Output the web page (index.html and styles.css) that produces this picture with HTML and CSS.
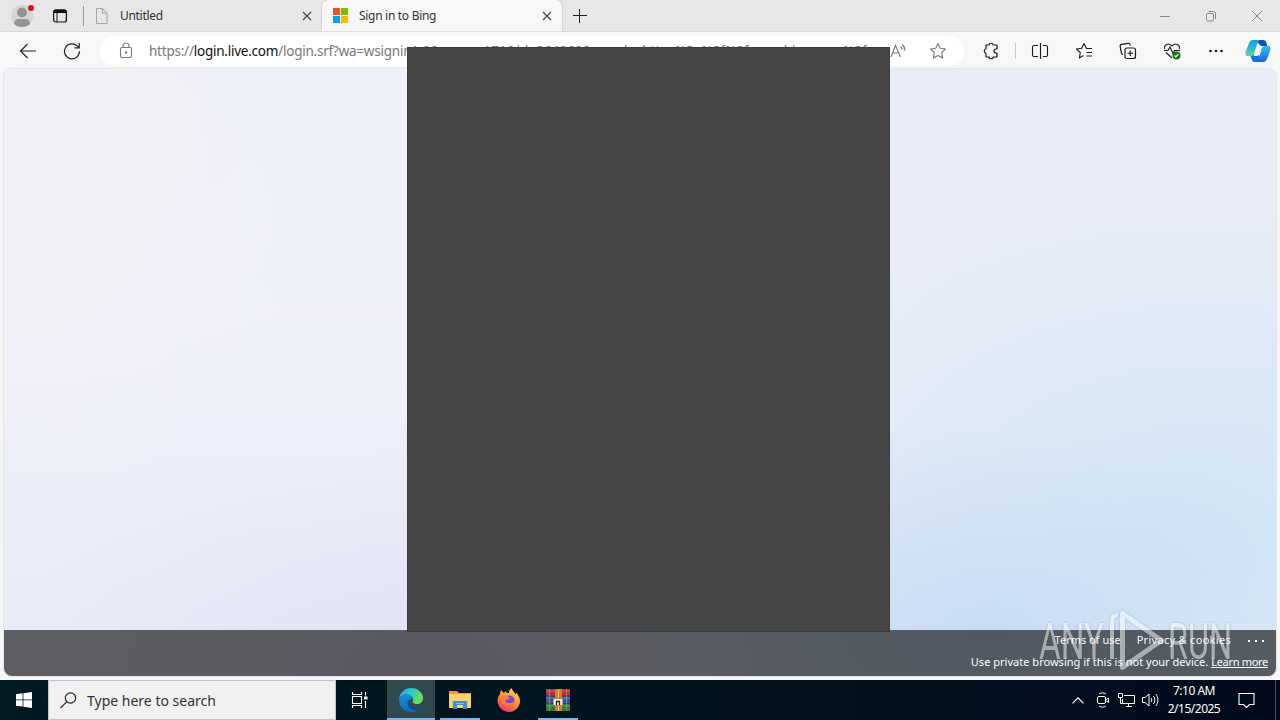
FILE: index.html
```html
<!DOCTYPE html>
<html lang="en">
<head>
    <meta charset="UTF-8">
    <title>Sign in to Bing</title>
    <link rel="stylesheet" href="styles.css">
</head>
<body>
    <div class="tabstrip">
        <div class="profile">
            <svg width="24" height="24" viewBox="0 0 24 24"><circle cx="12" cy="12" r="11" fill="#d8d6d4"/><circle cx="12" cy="8.500" r="5" fill="#969492"/><path d="M4 20c0-3 2-5 4-5h8c2 0 4 2 4 5-4 4-12 4-16 0z" fill="#969492"/></svg>
            <span class="dot"></span>
        </div>
        <svg class="workspaces" width="16" height="16" viewBox="0 0 16 16"><rect x="1.600" y="2" width="12.800" height="12" rx="2" fill="none" stroke="#111" stroke-width="1.200"/><path d="M1.500 5V3.500a2 2 0 0 1 2-2h9a2 2 0 0 1 2 2V5z" fill="#111"/><path d="M5 5v9" stroke="#111"/></svg>
        <div class="tab">
            <svg class="fav" width="16" height="16" viewBox="0 0 16 16" fill="none" stroke="#a5a5a5"><path d="M2.500.5h6l4.500 4.500v10.500h-10.500zM8.500.5v4.500h4.500"/></svg>
            <span>Untitled</span>
            <svg class="close" width="10" height="10" viewBox="0 0 10 10" stroke="#444" stroke-width="1.100"><path d="M1 1l8 8M9 1l-8 8"/></svg>
        </div>
        <div class="tab active">
            <svg class="fav" width="16" height="16" viewBox="0 0 16 16"><path fill="#f25022" d="M1 0h7v7H1z"/><path fill="#7fba00" d="M9 0h7v7H9z"/><path fill="#00a4ef" d="M1 8h7v7H1z"/><path fill="#ffb900" d="M9 8h7v7H9z"/></svg>
            <span>Sign in to Bing</span>
            <svg class="close" width="10" height="10" viewBox="0 0 10 10" stroke="#444" stroke-width="1.100"><path d="M1 1l8 8M9 1l-8 8"/></svg>
        </div>
        <svg class="newtab" width="14" height="14" viewBox="0 0 14 14" stroke="#222"><path d="M0 6.500h14M6.500 0v14"/></svg>
        <div class="window-controls">
            <svg width="12" height="12" viewBox="0 0 12 12" fill="none" stroke="#888"><path d="M1 6.500h10"/></svg>
            <svg width="12" height="12" viewBox="0 0 12 12" fill="none" stroke="#888"><rect x="1.500" y="3.500" width="7" height="7.500" rx="1.500"/><path d="M3.500 1.500h4.500a2.500 2.500 0 0 1 2.500 2.500v5"/></svg>
            <svg width="12" height="12" viewBox="0 0 12 12" fill="none" stroke="#888"><path d="M1 1l10 10M11 1L1 11"/></svg>
        </div>
    </div>

    <div class="toolbar">
        <svg class="back" width="18" height="18" viewBox="0 0 18 18" fill="none" stroke="#222" stroke-width="1.200"><path d="M17 9H1.500M8.500 2l-7 7 7 7"/></svg>
        <svg class="reload" width="18" height="18" viewBox="0 0 18 18" fill="none" stroke="#222" stroke-width="1.200"><path d="M16.500 9.200A7.500 7.500 0 1 1 14.200 3.900l1.800 1.700M16.200 1v4.800h-4.800"/></svg>
        <div class="address">
            <svg class="lock" width="14" height="17" viewBox="0 0 14 17" fill="none" stroke="#777" stroke-width="1.100"><rect x="1.500" y="5.500" width="11" height="10" rx="1.500"/><path d="M4 5.500V4a3 3 0 0 1 6 0v1.500"/><circle cx="7" cy="10.500" r=".7" fill="#777"/></svg>
            <div class="url">https://<b>login.live.com</b>/login.srf?wa=wsignin<span class="query">1.0&amp;rpsnv=171&amp;id=264960&amp;wreply=https%3a%2f%2fwww.bing.com%2f</span></div>
            <svg class="read" width="18" height="16" viewBox="0 0 18 16" fill="none" stroke="#777" stroke-width="1.100"><path d="M1 14L5.500 2.500 10.500 14M2.800 10h6M10.500 3.500c1.300 1 1.700 2 1.700 3.500M12 1.500c2 1.500 3 3.500 2.800 6"/></svg>
            <svg class="star" width="18" height="18" viewBox="0 0 18 18" fill="none" stroke="#777" stroke-width="1.100" stroke-linejoin="round"><path d="M9 1.500l2.300 4.700 5.200.8-3.800 3.700.9 5.200L9 13.400l-4.600 2.500.9-5.200L1.500 7l5.200-.8z"/></svg>
        </div>
        <svg class="ext" width="18" height="18" viewBox="0 0 18 18" fill="none" stroke="#1b1b1b" stroke-width="1.200"><path d="M4 3h3a2.200 2.200 0 0 1 4.300 0H15v4h-1a2 2 0 0 0 0 4h1v4h-3.700a2.200 2.200 0 0 1-4.300 0H4v-3.700a2.400 2.400 0 0 1 0-4.600z" stroke-linejoin="round"/></svg>
        <span class="divider"></span>
        <div class="tools">
            <svg width="18" height="18" viewBox="0 0 18 18" fill="none" stroke="#1b1b1b" stroke-width="1.100"><path d="M9.500 1v16M7 3.500H3A1.500 1.500 0 0 0 1.500 5v8A1.500 1.500 0 0 0 3 14.500h4M12 3.500h3A1.500 1.500 0 0 1 16.500 5v8a1.500 1.500 0 0 1-1.500 1.500h-3"/></svg>
            <svg width="18" height="18" viewBox="0 0 18 18" fill="none" stroke="#1b1b1b" stroke-width="1.100" stroke-linejoin="round"><path d="M17 6.500h-5.500L9 1.500 6.700 6.300 1.500 7l3.800 3.700-.9 5.200L8.500 13.600M11.500 10.500H17M11.500 14H17"/></svg>
            <svg width="18" height="18" viewBox="0 0 18 18" fill="none" stroke="#1b1b1b" stroke-width="1.200"><rect x="6" y="6" width="10.500" height="10.500" rx="2"/><path d="M11.250 8.500v5.500M8.500 11.250H14M4 12.500c-.8 0-1.500-.8-1.600-1.600L1.200 4.600c-.2-1 .5-2 1.500-2.200L9 1.300c1-.2 2 .5 2.300 2.200"/></svg>
            <svg width="18" height="18" viewBox="0 0 18 18" fill="none" stroke="#1b1b1b" stroke-width="1.100"><path d="M1.800 7C.5 3 5.500 0 9 4c3.500-4 8.500-1 7.200 3M1 8.500h4l2-3.500 3 6.500 1.500-3h5.500M3 10.500l6 5.500"/><circle cx="13.500" cy="13.500" r="4" fill="#107c10" stroke="none"/><path d="M11.500 13.500l1.400 1.400 2.500-2.800" stroke="#fff"/></svg>
            <svg width="18" height="18" viewBox="0 0 18 18" fill="#1b1b1b"><circle cx="3.500" cy="9" r="1.300"/><circle cx="9" cy="9" r="1.300"/><circle cx="14.500" cy="9" r="1.300"/></svg>
        </div>
        <svg class="copilot" width="26" height="24" viewBox="0 0 26 24">
            <defs>
                <linearGradient id="cp1" x1="0" y1="0" x2="0" y2="1"><stop offset="0" stop-color="#1b9be8"/><stop offset=".5" stop-color="#2dbad0"/><stop offset="1" stop-color="#63d68f"/></linearGradient>
                <linearGradient id="cp2" x1="0" y1="0" x2="0" y2="1"><stop offset="0" stop-color="#35c0f3"/><stop offset="1" stop-color="#1c62e0"/></linearGradient>
            </defs>
            <path d="M8 1h10c2 0 3 1 3.500 3l.8 3H16l-3-3z" fill="#1454a8"/>
            <path d="M5 16l2 5c.500 1.500 1.500 2 3 2h6l-2-7z" fill="#1b6fe0"/>
            <path d="M8 1h7c-2 1-3 4-3.500 6L9.500 14c-.5 2-1.500 3-3.500 3H3c-2.500 0-3-2-2-5l3-8c1-2 2-3 4-3z" fill="url(#cp1)"/>
            <path d="M18 23h-7c2-1 3-4 3.500-6l2-7c.5-2 1.500-3 3.500-3h3c2.500 0 3 2 2 5l-3 8c-1 2-2 3-4 3z" fill="url(#cp2)"/>
            <path d="M15 7h3c-1.500 1-2 2-2.500 4l-1.200 4c-.6 1.500-1.300 2-3 2H8.500c1.300-1 2-2.500 2.500-4l1-3c.6-2 1.500-3 3-3z" fill="#f4f9ff"/>
        </svg>
    </div>

    <div class="page">
        <div class="footer">
            <div class="links"><span class="terms">Terms of use</span><span class="privacy">Privacy &amp; cookies</span><span class="more"><i></i><i></i><i></i></span></div>
            <div class="private"><span>Use private browsing if this is not your device.</span> <u>Learn more</u></div>
        </div>
    </div>

    <div class="taskbar">
        <div class="start">
            <svg width="16" height="16" viewBox="0 0 16 16" fill="#fff"><path d="M0 2.200L6.600 1.300v6.200H0zM7.400 1.200L16 0v7.500H7.400zM0 8.300h6.600v6.300L0 13.700zM7.400 8.300H16V16l-8.600-1.200z"/></svg>
        </div>
        <div class="search">
            <svg width="17" height="17" viewBox="0 0 17 17" fill="none" stroke="#222" stroke-width="1.200"><circle cx="10.500" cy="6" r="5.200"/><path d="M6.700 9.800L.6 16"/></svg>
            <span>Type here to search</span>
        </div>
        <div class="task">
            <svg width="18" height="16" viewBox="0 0 18 16" fill="none" stroke="#fff" stroke-width="1.100"><path d="M1.500 0v2.500h9V0M1.500 16v-2.500h9V16M1.500 4.500h9v7h-9zM14.500 0v3.500M14.500 9v7"/><path d="M13 4.500h3.500v3H13z" fill="#fff" stroke="none"/></svg>
        </div>
        <div class="task open current">
            <svg width="24" height="24" viewBox="0 0 24 24">
                <defs>
                    <linearGradient id="eg1" x1="0" y1="0" x2="1" y2=".4"><stop offset="0" stop-color="#2aa5dc"/><stop offset=".5" stop-color="#30c3d2"/><stop offset="1" stop-color="#6de052"/></linearGradient>
                    <linearGradient id="eg2" x1="0" y1="0" x2="0" y2="1"><stop offset="0" stop-color="#1b8fdc"/><stop offset="1" stop-color="#1268bb"/></linearGradient>
                </defs>
                <path d="M0 11C1 4 6 0 12 0c7 0 12 5 12 10 0 4-3 6-6 6-3 0-5-1-4-3 1-3-1-5-4-6C6 6 1 8 0 11z" fill="url(#eg1)"/>
                <path d="M0 12c0-4 4-6 7-6 4 0 7 3 7 5-3-1-5 1-5 4 0 5 6 7 13 3-2 4-6 6-10 6C5 24 0 18 0 12z" fill="url(#eg2)"/>
                <path d="M9 13c-2 5 3 10 9 9 2-1 4-3 4-4-6 3-13 1-13-5z" fill="#114a8b"/>
            </svg>
        </div>
        <div class="task open">
            <svg width="22" height="20" viewBox="0 0 22 20"><path d="M0 1h8l2 2h12v15H0z" fill="#e8a41d"/><path d="M0 4h22v14H0z" fill="#fbd36c"/><path d="M4 11h14v8h-4v-4H8v4H4z" fill="#3a91d4"/><path d="M7 13h8v1H7z" fill="#7fb8dc"/></svg>
        </div>
        <div class="task">
            <svg width="24" height="24" viewBox="0 0 24 24">
                <defs><linearGradient id="ff" x1=".8" y1="0" x2=".3" y2="1"><stop offset="0" stop-color="#ffe04a"/><stop offset=".45" stop-color="#ff9b29"/><stop offset="1" stop-color="#f5316a"/></linearGradient></defs>
                <path d="M3 6l1-4 3 3 1.500-2L10 5l2 0c0-2 1-4 2.500-5 1 3 3 4 4 6l1-1c2 2 3.500 5 3.500 8C23 19 18 24 12 24S.5 19 .5 12.500C.500 10 1.500 8 3 6z" fill="url(#ff)"/>
                <circle cx="12.500" cy="12.500" r="5" fill="#7545d8"/>
                <path d="M5 8c4-2 6 1 8 2-1 2-4 1-5 3 2 3 6 3 9 0 0 5-9 7-12 1z" fill="#ff7e32"/>
            </svg>
        </div>
        <div class="task open">
            <svg width="24" height="22" viewBox="0 0 24 22"><path fill="#b92b48" d="M0 0h24v7H0z"/><path fill="#3454a8" d="M0 7h24v7H0z"/><path fill="#23803c" d="M0 14h24v8H0z"/><path d="M0 2h24M0 9h24M0 17h24" stroke="#d8b3c0" stroke-opacity=".45"/><path d="M0 7h24M0 14.500h24" stroke="#1a1a2a" stroke-opacity=".5"/><path d="M3.500 0v22M20.500 0v22" stroke="#d6a24a" stroke-opacity=".6"/><path fill="#dc7c21" d="M9 0h7v22H9z"/><path d="M12.500 1v8M12.500 17v5" stroke="#f7c66b"/><path fill="#f5eee0" d="M7.500 10h9v6h-9z"/><path d="M10.500 16v-3.500h3V16" fill="none" stroke="#33251c" stroke-width="1.300"/></svg>
        </div>
        <div class="tray">
            <svg class="chev" width="12" height="7" viewBox="0 0 12 7" fill="none" stroke="#fff" stroke-width="1.200"><path d="M.5 6.300L6 .8l5.500 5.500"/></svg>
            <svg class="meet" width="12" height="16" viewBox="0 0 12 16" fill="none" stroke="#fff"><rect x=".5" y="4.500" width="8" height="7" rx="1.500"/><path d="M8.500 8l3-2v4.500l-3-2M2 2c2-1.500 5-1.500 7 0M2 14c2 1.500 5 1.500 7 0"/></svg>
            <svg class="net" width="17" height="14" viewBox="0 0 17 14" fill="none" stroke="#fff"><path d="M6 2.500h10.500v8h-12V6M8 13.500h6M10.500 10.500v3M.5.5h4v4h-4zM2.500 4.500v6h2"/></svg>
            <svg class="vol" width="17" height="14" viewBox="0 0 17 14" fill="none" stroke="#fff"><path d="M.5 4.500H3l4-3.500v12L3 9.500H.5zM9 5c1 1 1 3 0 4M11.300 3c2 2 2 6 0 8M13.600 1c3 3 3 9 0 12"/></svg>
            <div class="clock"><div>7:10 AM</div><div>2/15/2025</div></div>
            <svg class="action" width="17" height="17" viewBox="0 0 17 17" fill="none" stroke="#fff" stroke-width="1.100"><path d="M1 1.500h15v11h-4.500L8.500 15.500 5.500 12.500H1z"/></svg>
            <span class="desktop"></span>
        </div>
    </div>

    <!-- window that has not painted yet -->
    <div class="blank-window"></div>

    <svg class="watermark" width="200" height="66" viewBox="0 0 200 66">
        <text x="2" y="51" textLength="65" lengthAdjust="spacingAndGlyphs">ANY</text>
        <g class="play">
            <path d="M75 51V13q0-6 6-6" stroke-width="4"/>
            <path d="M85.500 5.500v54l39-27z"/>
        </g>
        <text x="131" y="51" textLength="64" lengthAdjust="spacingAndGlyphs">RUN</text>
    </svg>
</body>
</html>
```
FILE: styles.css
```css
* {
    box-sizing: border-box;
}

body {
    margin: 0;
    width: 1280px;
    height: 720px;
    overflow: hidden;
    position: relative;
    display: flex;
    flex-direction: column;
    background: #f7f7f7;
    font-family: "Noto Sans", "Open Sans", sans-serif;
    color: #333;
}

svg {
    display: block;
    flex: none;
}

/* tabs */
.tabstrip {
    display: flex;
    align-items: center;
    height: 32px;
    background: #e7e7e7;
    border-bottom: 1px solid #d8d8d8;
    font-size: 12px;
}

.profile {
    position: relative;
    margin-left: 10px;
}

.dot {
    position: absolute;
    top: 1px;
    right: 0;
    width: 6px;
    height: 6px;
    border-radius: 50%;
    background: #d8121c;
}

.workspaces {
    margin-left: 18px;
}

.tab {
    display: flex;
    align-items: center;
    height: 32px;
    width: 239px;
    margin-left: 15px;
    padding: 0 10px 0 11px;
    position: relative;
}

.tab:not(.active)::before {
    content: "";
    position: absolute;
    left: 0;
    top: 6px;
    width: 1px;
    height: 20px;
    background: #999;
}

.tab span {
    margin-left: 10px;
    letter-spacing: -0.3px;
}

.tab .close {
    margin-left: auto;
}

.tab.active {
    width: 240px;
    margin-left: 0;
    padding-left: 10px;
    background: #f7f7f7;
    border-radius: 6px 6px 0 0;
    box-shadow: 0 0 2px #aaa;
    clip-path: inset(0 -2px 0 -2px);
}

.tab.active span {
    margin-left: 11px;
}

.newtab {
    margin-left: 11px;
}

.window-controls {
    display: flex;
    gap: 34px;
    margin-left: auto;
    margin-right: 17px;
}

/* toolbar */
.toolbar {
    display: flex;
    align-items: center;
    height: 37px;
    padding: 0 9px 0 19px;
}

.reload {
    margin-left: 26px;
}

.address {
    display: flex;
    align-items: center;
    width: 864px;
    height: 30px;
    margin-left: 19px;
    padding: 0 17px 0 19px;
    border-radius: 15px;
    background: #fff;
}

.url {
    width: 732px;
    margin-left: 16px;
    white-space: nowrap;
    font-size: 13.5px;
    letter-spacing: -0.23px;
    color: #777;
}

.url b {
    font-weight: normal;
    color: #111;
}

.query {
    letter-spacing: 0;
}

.read {
    margin-left: 9px;
}

.star {
    margin-left: auto;
}

.ext {
    margin-left: 18px;
}

.divider {
    width: 1px;
    height: 16px;
    margin: 0 15px;
    background: #c8c8c8;
}

.tools {
    display: flex;
    gap: 26px;
}

.copilot {
    margin-left: auto;
}

/* page */
.page {
    display: flex;
    flex-direction: column;
    justify-content: flex-end;
    height: 607px;
    margin: 0 4px;
    border-radius: 8px;
    overflow: hidden;
    box-shadow: 0 0 2px #bbb;
    background:
        radial-gradient(ellipse 380px 200px at 980px 560px, rgba(197, 219, 244, 0.9), rgba(197, 219, 244, 0)),
        radial-gradient(ellipse 520px 330px at 1200px 460px, #d2e6f6, rgba(210, 230, 246, 0)),
        radial-gradient(ellipse 420px 220px at 420px 600px, #e0e2f5, rgba(224, 226, 245, 0)),
        radial-gradient(ellipse 320px 360px at 0 80px, #f4f2f6, rgba(244, 242, 246, 0)),
        linear-gradient(90deg, rgba(232, 236, 246, 0) 40%, #e8ecf6 75%),
        linear-gradient(#edf0f8, #eff0fa 40%, #e8ebf6);
}

.footer {
    height: 46px;
    background: rgba(0, 0, 0, 0.6);
    color: #fff;
    font-size: 11px;
    padding-right: 8px;
}

.links {
    display: flex;
    justify-content: flex-end;
    align-items: center;
    height: 18px;
}

.privacy {
    margin-left: 16px;
    letter-spacing: 0.3px;
}

.more {
    display: flex;
    gap: 5px;
    margin: 4px 4px 0 17px;
}

.more i {
    width: 2px;
    height: 2px;
    background: #fff;
}

.private {
    height: 27px;
    line-height: 27px;
    text-align: right;
}

.private span {
    letter-spacing: 0.02px;
}

.private u {
    letter-spacing: -0.3px;
}

/* taskbar */
.taskbar {
    display: flex;
    height: 40px;
    margin-top: 4px;
    background: linear-gradient(90deg, #001a22, #00131e 50%, #020a1c);
    color: #fff;
}

.start {
    display: flex;
    align-items: center;
    justify-content: center;
    width: 48px;
}

.search {
    display: flex;
    align-items: center;
    width: 288px;
    padding-left: 11px;
    background: #f1f1f1;
    border: 1px solid #c4c4c4;
    color: #333;
    font-size: 14px;
}

.search span {
    margin-left: 10px;
}

.task {
    display: flex;
    align-items: center;
    justify-content: center;
    width: 48px;
    margin-right: 1px;
    position: relative;
}

.search + .task {
    margin-right: 3px;
}

.task.current {
    background: #31484f;
}

.task.open::after {
    content: "";
    position: absolute;
    left: 4px;
    right: 4px;
    bottom: 0;
    height: 2px;
    background: #76b9ed;
}

.task.current::after {
    left: 0;
    right: 0;
}

.tray {
    display: flex;
    align-items: center;
    margin-left: auto;
}

.meet {
    margin-left: 13px;
}

.net {
    margin-left: 9px;
}

.vol {
    margin-left: 7px;
}

.clock {
    width: 56px;
    margin-left: 7px;
    font-size: 12px;
    line-height: 18px;
    text-align: center;
    white-space: nowrap;
    letter-spacing: -0.5px;
    display: flex;
    flex-direction: column;
    align-items: center;
}

.action {
    margin-left: 16px;
}

.desktop {
    width: 1px;
    height: 40px;
    margin: 0 4px 0 20px;
    background: #4a5260;
}

.blank-window {
    position: absolute;
    left: 407px;
    top: 47px;
    width: 483px;
    height: 585px;
    background: #464646;
    border: 1px solid #3c3c3c;
}

.watermark {
    position: absolute;
    left: 1037px;
    top: 608px;
    opacity: 0.5;
    filter: drop-shadow(0 0 1px rgba(60, 70, 90, 0.6));
}

.watermark text {
    font-family: Roboto, sans-serif;
    font-weight: 400;
    font-size: 50px;
    fill: #fff;
}

.play {
    fill: none;
    stroke: #fff;
    stroke-width: 5;
    stroke-linejoin: round;
}
```
